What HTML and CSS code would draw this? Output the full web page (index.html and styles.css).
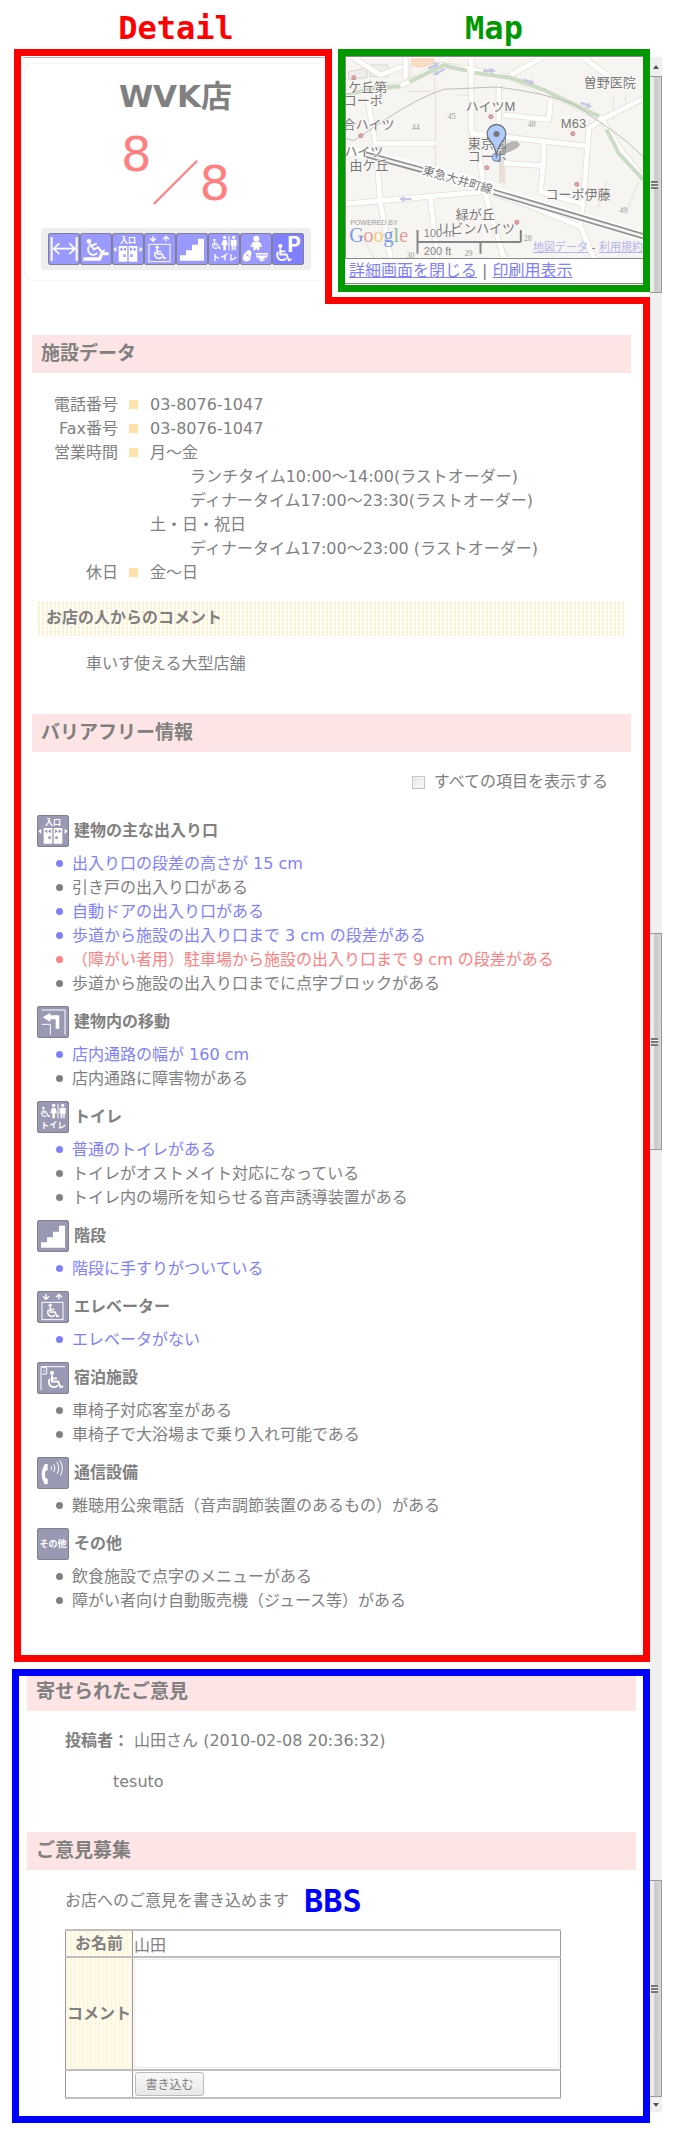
FILE: index.html
```html
<!DOCTYPE html>
<html lang="ja">
<head>
<meta charset="utf-8">
<meta name="viewport" content="width=device-width, initial-scale=1">
<title>WVK店</title>
<link rel="stylesheet" href="styles.css">
</head>
<body>
<svg class="defs" aria-hidden="true">
  <symbol id="wheelchair" viewBox="0 0 50 50">
    <circle cx="18" cy="6" r="5.5" fill="#fff"/>
    <path d="M18 12V28H34L40 43L47 40M19 20H31" fill="none" stroke="#fff" stroke-width="5"/>
    <path d="M13 21A13 13 0 1 0 33 38" fill="none" stroke="#fff" stroke-width="5"/>
  </symbol>
  <symbol id="width" viewBox="0 0 96 96">
    <path d="M11 12V84M86 12V84" stroke="#fff" stroke-width="6"/>
    <path d="M16 47H82M34 31L17 47L34 63M64 31L81 47L64 63" fill="none" stroke="#fff" stroke-width="5"/>
  </symbol>
  <symbol id="ramp" viewBox="0 0 96 96">
    <path d="M10 73H56L62 58H86V67H68L62 83H10Z" fill="#fff"/>
    <circle cx="27" cy="25" r="7" fill="#fff"/>
    <path d="M28 32L42 49L54 43L66 58L74 51M35 38L50 31" fill="none" stroke="#fff" stroke-width="6"/>
    <path d="M28 39A15 15 0 1 0 52 60" fill="none" stroke="#fff" stroke-width="5"/>
  </symbol>
  <symbol id="entrance" viewBox="0 0 96 96">
    <text x="48" y="30" class="icon-text" font-size="24" text-anchor="middle">入口</text>
    <path d="M20 39H46V86H20ZM50 39H76V86H50ZM13 41V57L4 49ZM83 41V57L92 49Z" fill="#fff"/>
    <path class="cut" d="M31 43V55L22 49ZM42 43V55L33 49ZM54 43V55L63 49ZM65 43V55L74 49ZM34 64H41V72H34ZM55 64H62V72H55Z"/>
  </symbol>
  <symbol id="elevator" viewBox="0 0 96 96">
    <path d="M27 9V24M18 16L27 25L36 16M66 25V11M57 19L66 10L75 19" fill="none" stroke="#fff" stroke-width="4"/>
    <rect x="15" y="34" width="63" height="52" fill="none" stroke="#fff" stroke-width="3"/>
    <use href="#wheelchair" x="23" y="37" width="46" height="46"/>
  </symbol>
  <symbol id="stairs" viewBox="0 0 96 96">
    <path d="M12 83V67H30V52H48V35H66V17H84V83Z" fill="#fff"/>
  </symbol>
  <symbol id="toilet" viewBox="0 0 96 96">
    <use href="#wheelchair" x="7" y="17" width="34" height="34"/>
    <path d="M63 8V52" stroke="#fff" stroke-width="3"/>
    <circle cx="50" cy="13" r="5" fill="#fff"/><path d="M45 20H55L60 37H54V52H46V37H40Z" fill="#fff"/>
    <circle cx="77" cy="13" r="5" fill="#fff"/><path d="M68 20H86V38H83V52H79V38H76V52H71V38H68Z" fill="#fff"/>
    <text x="49" y="82" class="icon-text" font-size="25" text-anchor="middle">トイレ</text>
  </symbol>
  <symbol id="baby" viewBox="0 0 96 96">
    <circle cx="49" cy="17" r="9" fill="#fff"/>
    <path d="M39 27H59L67 40L61 43L58 39V52H52L49 46L46 52H40V39L37 43L31 40Z" fill="#fff"/>
    <path d="M20 54L28 50L35 58L30 82L16 86L8 78L11 65Z" fill="#fff"/>
    <path d="M47 60H84L82 72L70 85H61L49 72Z" fill="#fff"/>
    <path class="cut-line" d="M50 66H81M53 72L62 82M78 72L69 82M17 64L27 70" fill="none"/>
  </symbol>
  <symbol id="parking" viewBox="0 0 96 96">
    <text x="44" y="57" class="icon-text" font-size="64">P</text>
    <use href="#wheelchair" x="4" y="32" width="58" height="58"/>
  </symbol>
  <symbol id="corridor" viewBox="0 0 96 96">
    <path d="M14 12H84V86M14 55H40V86" fill="none" stroke="#fff" stroke-width="3"/>
    <path d="M17 34L40 20V28H67V68H56V40H40V48Z" fill="#fff"/>
  </symbol>
  <symbol id="hotel" viewBox="0 0 96 96">
    <path d="M12 84V14H84M15 17H29V36H15" fill="none" stroke="#fff" stroke-width="3"/>
    <path d="M20 24L26 27L20 30Z" fill="#fff"/>
    <use href="#wheelchair" x="24" y="26" width="58" height="58"/>
  </symbol>
  <symbol id="phone" viewBox="0 0 96 96">
    <path d="M23 22Q5 52 23 82L32 81V65L25 62Q22 52 25 43L32 39V21Z" fill="#fff"/>
    <path d="M42 28Q47 34 42 40M50 22Q58 34 50 46M59 15Q71 32 60 51M68 10Q83 32 70 56" fill="none" stroke="#fff" stroke-width="3"/>
  </symbol>
  <symbol id="other" viewBox="0 0 96 96">
    <text x="48" y="58" class="icon-text" font-size="27" text-anchor="middle">その他</text>
  </symbol>
</svg>

<div class="page">
  <main class="content">
    <div class="labels">
      <div class="label label-detail">Detail</div>
      <div class="label label-map">Map</div>
    </div>

    <div class="top">
      <section class="summary">
        <div class="card">
          <h1 class="name">WVK店</h1>
          <p class="score"><span class="score-up">8</span>／8</p>
          <div class="icons">
            <svg class="icon"><use href="#width"/></svg>
            <svg class="icon"><use href="#ramp"/></svg>
            <svg class="icon"><use href="#entrance"/></svg>
            <svg class="icon"><use href="#elevator"/></svg>
            <svg class="icon"><use href="#stairs"/></svg>
            <svg class="icon"><use href="#toilet"/></svg>
            <svg class="icon"><use href="#baby"/></svg>
            <svg class="icon icon-strong"><use href="#parking"/></svg>
          </div>
        </div>
      </section>

      <section class="map">
        <div class="map-view">
          <svg class="map-canvas" viewBox="45 174 894 600" preserveAspectRatio="xMidYMid slice">
            <rect x="-400" y="0" width="1800" height="900" fill="#f7f5f1"/>
            <path d="M118 195H172V230H118ZM55 216L108 204L110 232L55 240Z" fill="#eeeeec" stroke="#d8d4cc" stroke-width="3"/>
            <path d="M243 170H310V190L270 202L243 196Z" fill="#fadcc4" stroke="#e5cdb5" stroke-width="2"/>
            <g fill="none" stroke="#e6e0d5" stroke-width="3">
              <path d="M230 274H313V232M315 275V510M380 285H430M240 195V250M850 290V360M885 285V310M830 540L800 630M925 545L885 640M90 700L130 774M500 720L540 774"/>
            </g>
            <g fill="none" stroke="#e6e0d5" stroke-width="19" stroke-linejoin="round">
              <path d="M225 170V235M45 278L215 255L330 195L420 208L540 232L700 300L815 358L870 450L940 535"/>
              <path d="M422 170V390L442 440L460 560L480 640L520 774M425 400L770 438M640 430V480L630 575L755 612M505 250V400M520 345L655 358L660 300M110 290L135 430L150 610L180 774M45 612L470 574L580 610L750 680L790 774M540 225L640 170M760 174L850 240M815 358L940 295M815 358L775 385L765 520L750 680M135 430H315M300 597L320 774M520 490L635 497M515 420V550M70 174L150 225L215 200"/>
            </g>
            <g fill="none" stroke="#fff" stroke-width="14" stroke-linejoin="round">
              <path d="M225 170V235M45 278L215 255L330 195L420 208L540 232L700 300L815 358L870 450L940 535"/>
              <path d="M422 170V390L442 440L460 560L480 640L520 774M425 400L770 438M640 430V480L630 575L755 612M505 250V400M520 345L655 358L660 300M110 290L135 430L150 610L180 774M45 612L470 574L580 610L750 680L790 774M540 225L640 170M760 174L850 240M815 358L940 295M815 358L775 385L765 520L750 680M135 430H315M300 597L320 774M520 490L635 497M70 174L150 225L215 200"/>
            </g>
            <path d="M45 286L120 266L210 258M236 245L340 195L410 212M432 218L540 233L640 270L700 300L806 350M828 388L865 460L939 540" fill="none" stroke="#cbdcc4" stroke-width="12"/>
            <path d="M45 415L70 422L170 355Q270 290 340 268L500 261Q650 280 730 312L850 395Q900 430 939 472" fill="none" stroke="#bdbdbd" stroke-width="3"/>
            <g fill="none">
              <path d="M45 448L300 510L480 570L700 635L939 708" stroke="#fff" stroke-width="26"/>
              <path d="M100 462L300 517L480 573L700 638L939 709" stroke="#909090" stroke-width="18"/>
              <path d="M100 462L300 517L480 573L700 638L939 709" stroke="#f4f4f4" stroke-width="8"/>
            </g>
            <g fill="#c5c5e6">
              <path d="M458 208H480V203L496 212L480 221V216H458ZM580 236L600 242L602 236L613 251L596 254L598 249L579 243ZM752 306L772 312L774 307L784 322L767 325L768 319L750 312ZM292 202L310 194L307 188L327 188L318 204L314 200L295 209ZM341 204L320 216L318 210L306 225L326 225L323 221L344 210ZM243 594H222V588L205 597L222 606V600H243Z"/>
            </g>
            <g fill="#f3a3aa" stroke="#b58a8e" stroke-width="3">
              <circle cx="70" cy="233" r="6"/><circle cx="91" cy="407" r="6"/><circle cx="481" cy="350" r="6"/><circle cx="727" cy="401" r="6"/><circle cx="469" cy="503" r="6"/><circle cx="739" cy="553" r="6"/><circle cx="559" cy="667" r="6"/>
            </g>
            <g class="map-small">
              <text x="352" y="358">45</text><text x="244" y="391">44</text><text x="592" y="382">48</text><text x="867" y="638">49</text><text x="580" y="724">28</text><text x="402" y="769">29</text><text x="228" y="773">30</text>
            </g>
            <g class="map-name">
              <text x="53" y="275">ケ丘第</text><text x="40" y="315">コーポ</text>
              <text x="37" y="388">合ハイツ</text><text x="42" y="467">ハイツ</text><text x="57" y="509">由ケ丘</text>
              <text x="406" y="332">ハイツM</text><text x="760" y="262">曽野医院</text><text x="691" y="383">M63</text>
              <text x="412" y="444">東京園</text><text x="412" y="484">コーポ</text>
              <text x="645" y="598">コーポ伊藤</text><text x="376" y="657">緑が丘</text><text x="320" y="699">リビンハイツ</text>
              <text class="map-line" x="274" y="522" transform="rotate(16 274 522)">東急大井町線</text>
            </g>
            <path d="M499 469Q520 425 554 423Q577 431 561 443Q540 456 499 470Z" fill="#777" opacity=".5"/>
            <circle cx="497" cy="472" r="12" fill="#a9c5fb" stroke="#7387a8" stroke-width="3"/>
            <path d="M498 472Q496 442 479 422A28 28 0 1 1 517 422Q500 442 498 472Z" fill="#b1cbfb" stroke="#70767f" stroke-width="4"/>
            <circle cx="498" cy="402" r="9" fill="#777"/>
            <path d="M261 690V761M261 726H571M571 690V726M450 726V761" fill="none" stroke="#858585" stroke-width="6"/>
            <g class="map-scale"><text x="280" y="710">100 m</text><text x="280" y="765">200 ft</text></g>
            <text class="map-powered" x="59" y="674">POWERED BY</text>
            <text x="56" y="727" class="map-logo"><tspan fill="#779be8">G</tspan><tspan fill="#e99a98">o</tspan><tspan fill="#edd07d">o</tspan><tspan fill="#779be8">g</tspan><tspan fill="#86bf8b">l</tspan><tspan fill="#e99a98">e</tspan></text>
          </svg>
          <div class="map-terms"><a href="#">地図データ</a> - <a href="#">利用規約</a></div>
        </div>
        <div class="map-links"><a href="#">詳細画面を閉じる</a> | <a href="#">印刷用表示</a></div>
      </section>
    </div>

    <div class="step"></div>
    <section class="detail">
      <h2 class="heading">施設データ</h2>
      <dl class="facts">
        <dt>電話番号</dt><dd>03-8076-1047</dd>
        <dt>Fax番号</dt><dd>03-8076-1047</dd>
        <dt>営業時間</dt>
        <dd>月～金
          <div class="hours">ランチタイム10:00～14:00(ラストオーダー)</div>
          <div class="hours">ディナータイム17:00～23:30(ラストオーダー)</div>
          土・日・祝日
          <div class="hours">ディナータイム17:00～23:00 (ラストオーダー)</div>
        </dd>
        <dt>休日</dt><dd>金～日</dd>
      </dl>
      <h3 class="subheading">お店の人からのコメント</h3>
      <p class="comment">車いす使える大型店舗</p>

      <h2 class="heading">バリアフリー情報</h2>
      <label class="show-all"><input type="checkbox" class="check">すべての項目を表示する</label>

      <div class="groups">
        <section>
          <h3 class="group-title"><svg class="icon icon-muted"><use href="#entrance"/></svg>建物の主な出入り口</h3>
          <ul class="items">
            <li class="good">出入り口の段差の高さが 15 cm</li>
            <li>引き戸の出入り口がある</li>
            <li class="good">自動ドアの出入り口がある</li>
            <li class="good">歩道から施設の出入り口まで 3 cm の段差がある</li>
            <li class="bad">（障がい者用）駐車場から施設の出入り口まで 9 cm の段差がある</li>
            <li>歩道から施設の出入り口までに点字ブロックがある</li>
          </ul>
        </section>
        <section>
          <h3 class="group-title"><svg class="icon icon-muted"><use href="#corridor"/></svg>建物内の移動</h3>
          <ul class="items">
            <li class="good">店内通路の幅が 160 cm</li>
            <li>店内通路に障害物がある</li>
          </ul>
        </section>
        <section>
          <h3 class="group-title"><svg class="icon icon-muted"><use href="#toilet"/></svg>トイレ</h3>
          <ul class="items">
            <li class="good">普通のトイレがある</li>
            <li>トイレがオストメイト対応になっている</li>
            <li>トイレ内の場所を知らせる音声誘導装置がある</li>
          </ul>
        </section>
        <section>
          <h3 class="group-title"><svg class="icon icon-muted"><use href="#stairs"/></svg>階段</h3>
          <ul class="items">
            <li class="good">階段に手すりがついている</li>
          </ul>
        </section>
        <section>
          <h3 class="group-title"><svg class="icon icon-muted"><use href="#elevator"/></svg>エレベーター</h3>
          <ul class="items">
            <li class="good">エレベータがない</li>
          </ul>
        </section>
        <section>
          <h3 class="group-title"><svg class="icon icon-muted"><use href="#hotel"/></svg>宿泊施設</h3>
          <ul class="items">
            <li>車椅子対応客室がある</li>
            <li>車椅子で大浴場まで乗り入れ可能である</li>
          </ul>
        </section>
        <section>
          <h3 class="group-title"><svg class="icon icon-muted"><use href="#phone"/></svg>通信設備</h3>
          <ul class="items">
            <li>難聴用公衆電話（音声調節装置のあるもの）がある</li>
          </ul>
        </section>
        <section>
          <h3 class="group-title"><svg class="icon icon-muted"><use href="#other"/></svg>その他</h3>
          <ul class="items">
            <li>飲食施設で点字のメニューがある</li>
            <li>障がい者向け自動販売機（ジュース等）がある</li>
          </ul>
        </section>
      </div>
    </section>

    <section class="bbs">
      <h2 class="heading heading-first">寄せられたご意見</h2>
      <p class="author"><b>投稿者：</b> 山田さん (2010-02-08 20:36:32)</p>
      <p class="message">tesuto</p>
      <h2 class="heading">ご意見募集</h2>
      <div class="intro">お店へのご意見を書き込めます<span class="label label-bbs">BBS</span></div>
      <form>
        <table class="form-table">
          <tr><th><label for="name">お名前</label></th><td><input id="name" class="name-input" type="text" value="山田"></td></tr>
          <tr><th><label for="comment">コメント</label></th><td><textarea id="comment" class="comment-input"></textarea></td></tr>
          <tr><td></td><td><button type="button" class="submit">書き込む</button></td></tr>
        </table>
      </form>
    </section>
  </main>

  <div class="scroll" aria-hidden="true">
    <span class="scroll-arrow scroll-up"></span>
    <span class="scroll-thumb"></span>
    <span class="scroll-track scroll-track-a"></span>
    <span class="scroll-thumb"></span>
    <span class="scroll-track scroll-track-b"></span>
    <span class="scroll-thumb"></span>
    <span class="scroll-arrow scroll-down"></span>
  </div>
</div>
</body>
</html>
```
FILE: styles.css
```css
* { box-sizing: border-box; }

body {
  margin: 0;
  background: #fff;
  color: #808080;
  font: 16px/24px "DejaVu Sans", "Noto Sans CJK JP", sans-serif;
}

h1, h2, h3, p, ul, dl, dd { margin: 0; padding: 0; }
a { color: #8080ff; }

.defs { display: none; }

.page {
  display: flex;
  padding: 0 11px 12px 12px;
}

.content { flex: 1; min-width: 0; }

/* Frame captions */
.labels { display: flex; height: 49px; padding-left: 2px; }
.label {
  font: bold 32px/32px "DejaVu Sans Mono", monospace;
  text-align: center;
}
.label-detail { width: 324px; padding-top: 12px; color: #f00; }
.label-map { flex: 1; padding-top: 12px; color: #090; }
.label-bbs { color: #00f; }

/* Summary and map */
.top {
  display: flex;
  gap: 6px;
  height: 248px;
  padding-left: 2px;
}

.summary {
  width: 318px;
  padding: 1px 0 0 2px;
  border: solid #f00;
  border-width: 7px 7px 0;
  overflow: hidden;
}
.summary::before {
  content: "";
  display: block;
  height: 1px;
  background: #b8b8b8;
}
.card {
  height: 218px;
  margin: 5px -2px 0 1px;
  padding: 12px 0 0;
  border: 1px solid #f5f5f5;
  border-radius: 9px;
}
.name {
  font-size: 31px;
  line-height: 40px;
  text-align: center;
}
.score {
  height: 112px;
  padding-top: 27px;
  color: #ff8080;
  font-size: 48px;
  line-height: 80px;
  text-align: center;
  white-space: nowrap;
}
.score-up { position: relative; top: -29px; }
.icons {
  display: flex;
  width: 270px;
  margin: 0 auto;
  padding: 5px 7px;
  background: #eee;
  border-radius: 4px;
}

.icon {
  flex: none;
  width: 32px;
  height: 32px;
  background: #9999ff;
  border-radius: 3px;
  box-shadow: inset 0 0 0 1px #808090;
  --tone: #9999ff;
}
.icon-strong { background: #8080ff; }
.icon-muted { background: #9999b3; --tone: #9999b3; }
.icon-text { fill: #fff; font-family: "Noto Sans CJK JP", sans-serif; font-weight: bold; }
.cut { fill: var(--tone); }
.cut-line { stroke: var(--tone); stroke-width: 3px; }

.map {
  flex: 1;
  min-width: 0;
  height: 243px;
  border: 7px solid #090;
}
.map-view {
  position: relative;
  height: 203px;
  padding-top: 1px;
  border: solid #888;
  border-width: 1px 0 1px 1px;
  overflow: hidden;
}
.map-canvas { display: block; width: 100%; height: 200px; }
.map-name {
  fill: #777;
  stroke: #f9f8f5;
  stroke-width: 5px;
  paint-order: stroke;
  font: 39px "Liberation Sans", "Noto Sans CJK JP", sans-serif;
}
.map-line { font-size: 36px; stroke: #fff; stroke-width: 10px; }
.map-small { fill: #999; font: 24px "Liberation Serif", serif; }
.map-scale { fill: #888; font: 33px "Liberation Sans", sans-serif; }
.map-powered { fill: #999; font: 21px "Liberation Sans", sans-serif; }
.map-logo { font: 60px "Liberation Serif", serif; }
.map-terms {
  position: absolute;
  right: 0;
  bottom: 1px;
  font-size: 11px;
  line-height: 18px;
  white-space: nowrap;
}
.map-terms a { color: #b3b3ee; }
.map-links {
  height: 25px;
  padding-left: 4px;
  border-bottom: 1px solid #888;
  white-space: nowrap;
}

/* Detail frame */
.step { height: 7px; margin-left: 313px; background: #f00; }
.detail {
  margin: -7px 0 7px 2px;
  padding: 38px 12px 42px 11px;
  border: solid #f00;
  border-width: 0 7px 7px;
}

.heading {
  height: 38px;
  padding-left: 9px;
  background: #fee5e5;
  font-size: 19px;
  line-height: 36px;
}
.facts {
  display: grid;
  grid-template-columns: 86px 1fr;
  column-gap: 32px;
  padding: 20px 0 17px;
}
.facts dt { text-align: right; white-space: nowrap; }
.facts dd { position: relative; }
.facts dd::before {
  content: "";
  position: absolute;
  left: -21px;
  top: 7px;
  width: 9px;
  height: 9px;
  background: #ffe1ac;
}
.hours { padding-left: 40px; }
.subheading {
  height: 34px;
  margin: 0 7px 0 6px;
  padding-left: 8px;
  background:
    linear-gradient(transparent 3px, #fff 3px) 0 0 / 4px 4px,
    linear-gradient(90deg, #fff0c4 2px, #fff 2px) 0 0 / 4px 4px;
  font-size: 16px;
  line-height: 32px;
}
.comment { padding: 16px 54px 38px; }

.show-all {
  display: flex;
  align-items: center;
  justify-content: flex-end;
  gap: 9px;
  padding: 18px 23px 21px 0;
}
.check {
  appearance: none;
  width: 13px;
  height: 13px;
  margin: 0;
  background: linear-gradient(135deg, #e2e2e2, #fff);
  border: 1px solid #c4c4c4;
  box-shadow: inset 0 0 0 1px #f4f4f4;
}

.groups {
  display: grid;
  gap: 10px;
  padding-left: 5px;
}
.group-title {
  display: flex;
  align-items: center;
  gap: 5px;
  font-size: 16px;
}
.items {
  padding: 5px 0 0 35px;
  list-style: none;
}
.items li { position: relative; }
.items li::before {
  content: "";
  position: absolute;
  left: -16px;
  top: 8px;
  width: 7px;
  height: 7px;
  border-radius: 50%;
  background: currentColor;
}
.good { color: #8080ff; }
.bad { color: #ff8080; }

/* Message board */
.bbs {
  padding: 0 7px 17px 8px;
  border: 7px solid #00f;
}
.heading-first { height: 35px; line-height: 31px; }
.author { padding: 18px 38px 0; }
.message { padding: 17px 86px 38px; }
.intro {
  display: flex;
  align-items: center;
  gap: 15px;
  height: 59px;
  padding: 2px 38px 0;
}
.form-table {
  width: 496px;
  max-width: 90%;
  margin-left: 38px;
  border-collapse: collapse;
}
.form-table th,
.form-table td {
  padding: 0 1px;
  border: 1px solid #999;
  border-top: 2px solid #bfbfbf;
  border-bottom: 2px solid #bfbfbf;
}
.form-table th {
  width: 67px;
  white-space: nowrap;
  background:
    linear-gradient(transparent 3px, #fffaea 3px) 0 0 / 4px 4px,
    linear-gradient(90deg, #fff3cc 2px, #fff 2px) 0 0 / 4px 4px;
}
.name-input {
  display: block;
  width: 100%;
  height: 25px;
  padding: 0;
  border: 0;
  background: none;
  color: inherit;
  font: inherit;
}
.comment-input {
  display: block;
  width: 100%;
  height: 109px;
  margin: 1px 0;
  border: 1px solid #eee;
  resize: none;
  font: inherit;
}
.submit {
  display: block;
  width: 69px;
  height: 24px;
  margin: 1px;
  padding: 0;
  background: linear-gradient(#f8f8f8, #e8e8e8);
  border: 1px solid #bbb;
  border-radius: 3px;
  color: inherit;
  font: 12px/20px "Noto Sans CJK JP", sans-serif;
}

/* Scroll bar strip */
.scroll {
  display: flex;
  flex-direction: column;
  width: 12px;
  margin: 57px 0 11px;
  background: #f0f0f0;
}
.scroll-arrow {
  display: flex;
  align-items: center;
  justify-content: center;
  height: 19px;
}
.scroll-down { height: 15px; }
.scroll-arrow::before {
  content: "";
  border: solid transparent;
  border-width: 0 3px 4px;
  border-bottom-color: #555;
}
.scroll-down::before { border-width: 4px 3px 0; border-top-color: #555; }
.scroll-thumb {
  display: flex;
  align-items: center;
  height: 217px;
  padding-left: 1px;
  background: linear-gradient(90deg, #f4f4f4, #e6e6e6 35%, #c8c8c8 45%, #d8d8d8);
  border: solid #999;
  border-width: 1px 1px 1px 0;
}
.scroll-thumb::before {
  content: "";
  width: 7px;
  height: 8px;
  background: repeating-linear-gradient(#777 0 2px, #eee 2px 3px);
}
.scroll-track-a { flex: 640; }
.scroll-track-b { flex: 730; }
```
